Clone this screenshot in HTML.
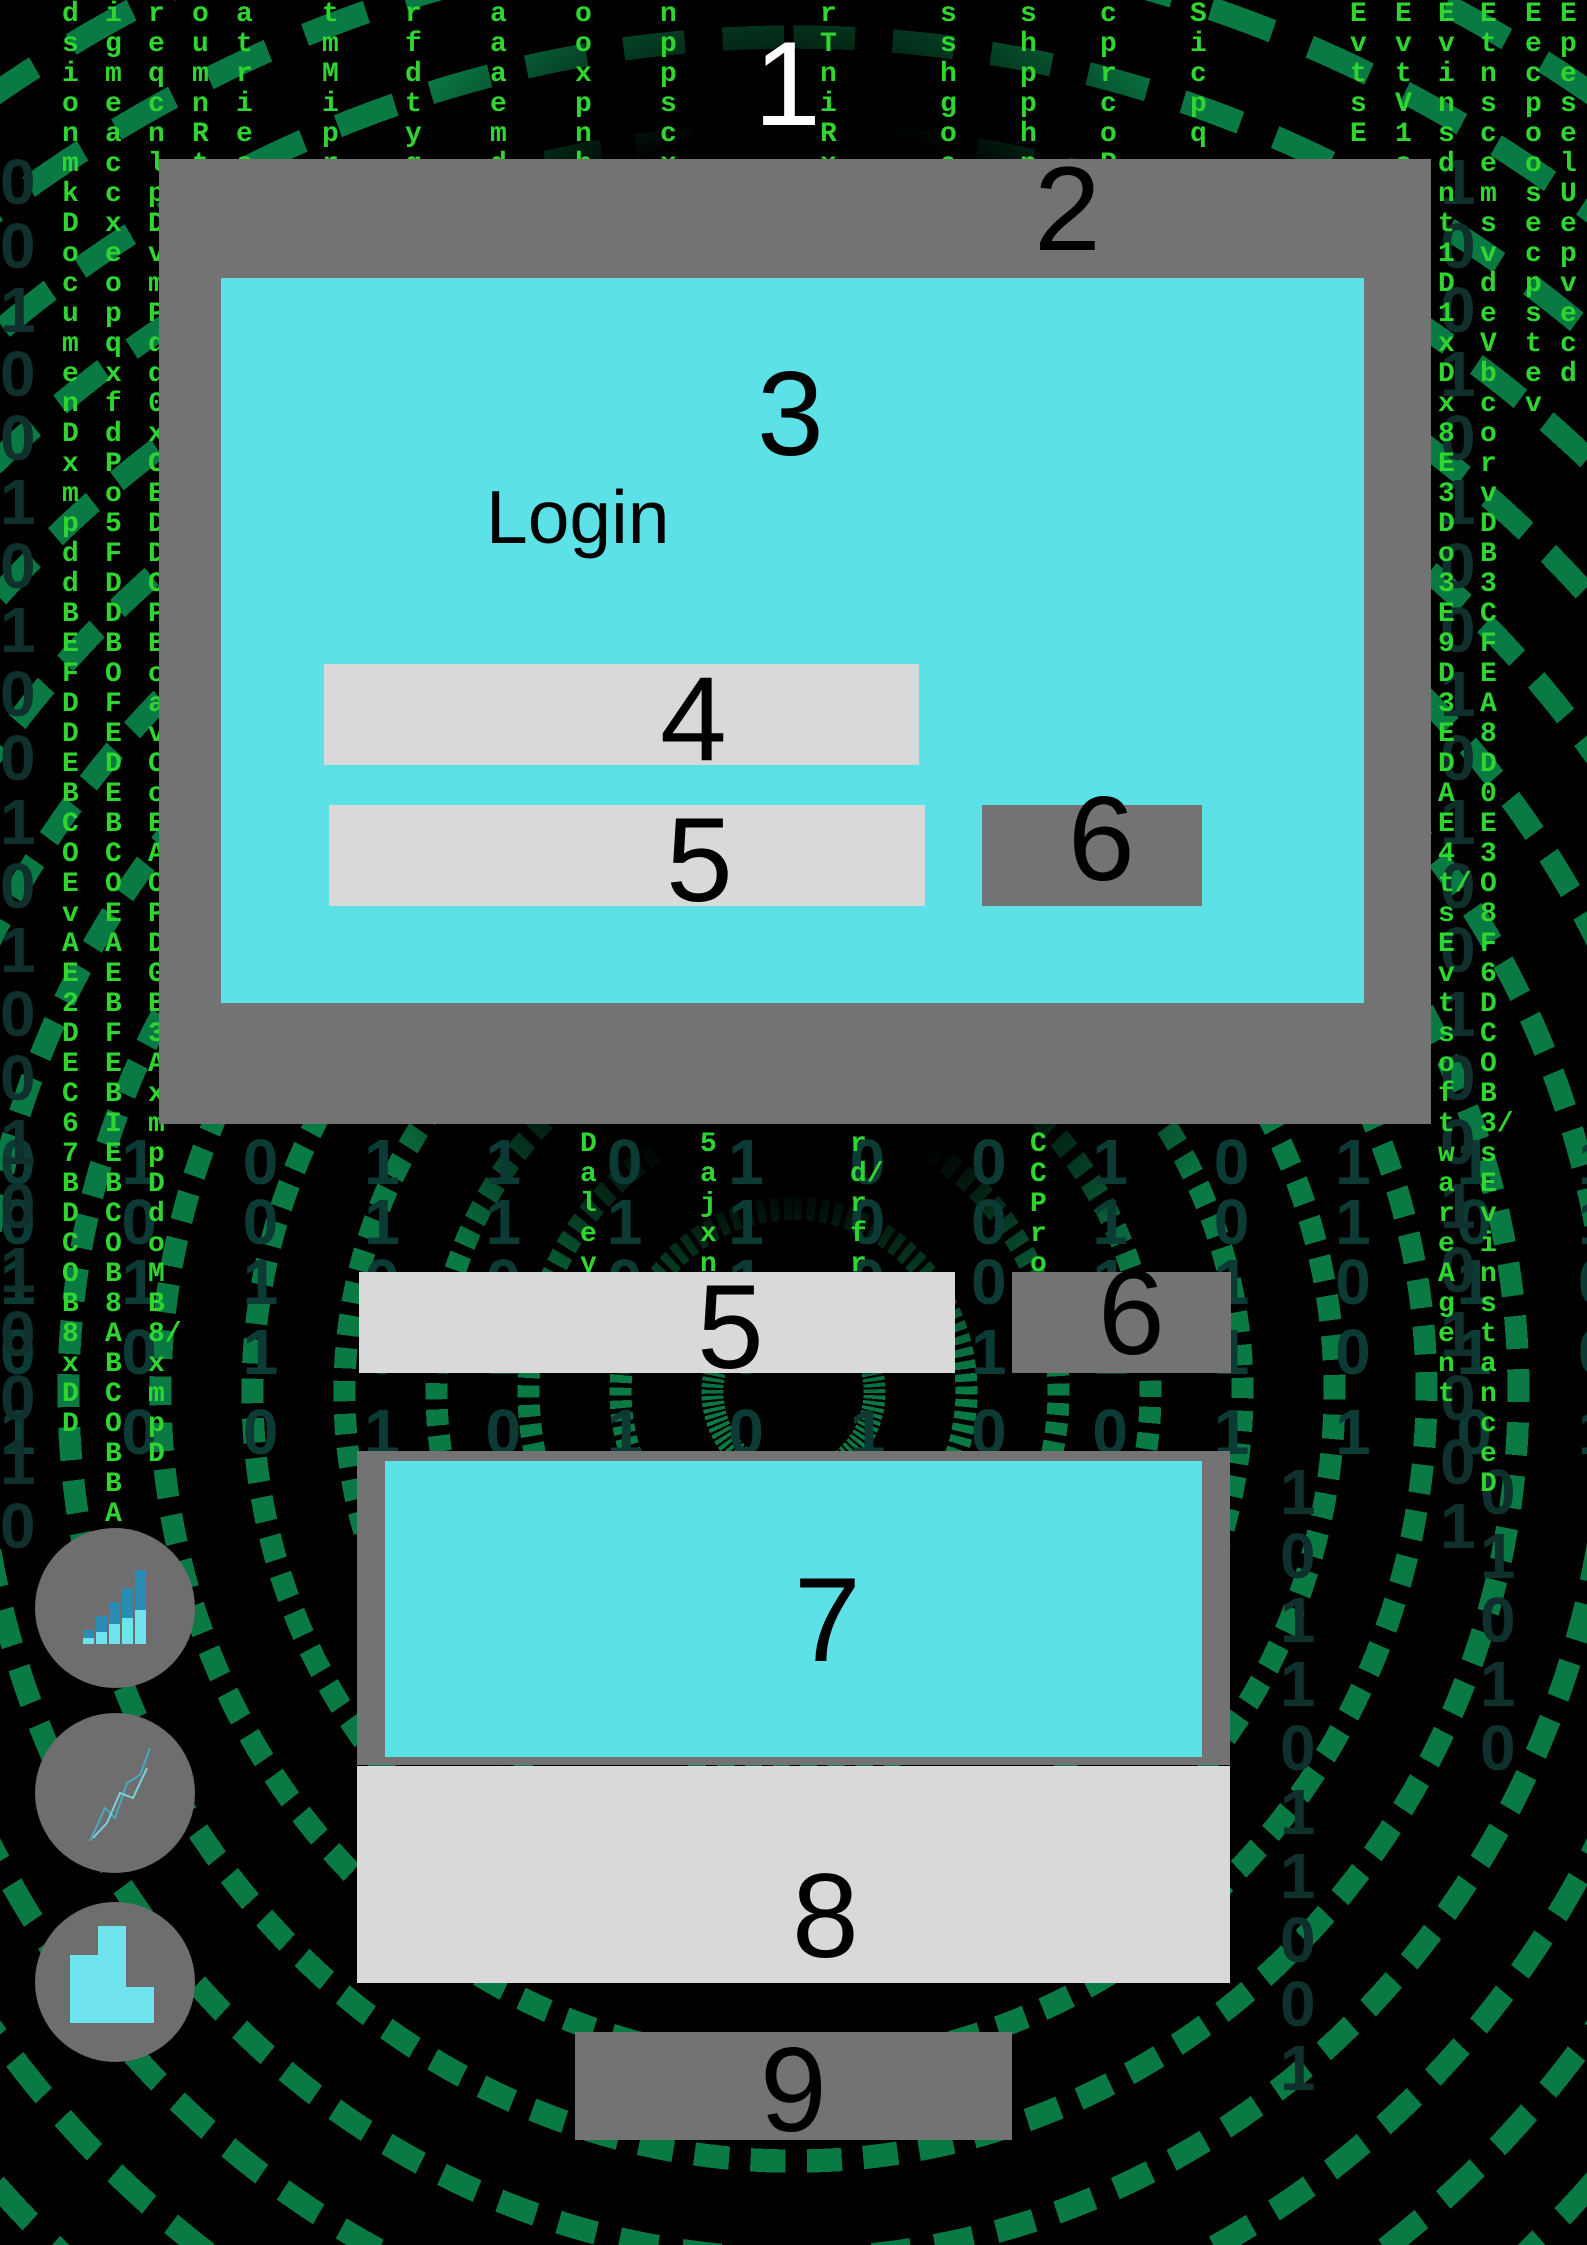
<!DOCTYPE html>
<html><head><meta charset="utf-8"><style>
html,body{margin:0;padding:0}
body{width:1587px;height:2245px;position:relative;overflow:hidden;background:#000;font-family:"Liberation Sans",sans-serif}
.a{position:absolute}
.n{position:absolute;color:#000;font-size:120px;line-height:1;font-weight:300}
.col{position:absolute;color:#2fd62f;font-family:"Liberation Mono",monospace;font-size:28px;line-height:30px;width:20px;word-break:break-all;font-weight:bold}
.bin{position:absolute;color:#0c3b36;font-size:64px;font-weight:bold;letter-spacing:34px;white-space:nowrap;overflow:hidden;width:1587px}
.vb{position:absolute;color:#10302e;font-size:64px;font-weight:bold;width:50px;line-height:64px;word-break:break-all}
#rings{position:absolute;left:0;top:0;width:1587px;height:2245px;background:repeating-radial-gradient(ellipse 100% 75% at 50% 62%,transparent 0 70px,#0a7a45 70px 92px)}
#dash{position:absolute;left:0;top:0;width:1587px;height:2245px;background:repeating-conic-gradient(from 0deg at 50% 62%,transparent 0 2.6deg,#000 2.6deg 4.2deg)}
#cmask{position:absolute;left:250px;top:-100px;width:1100px;height:1500px;background:radial-gradient(ellipse at center,#000 50%,transparent 72%)}
</style></head><body>
<div id="rings"></div><div id="dash"></div><div id="cmask"></div>
<div class="bin" style="left:0;top:1125px">0 1 0 1 1 0 1 0 0 1 0 1 1 1 0 1 0 1 0 1 0 1 1</div>
<div class="bin" style="left:0;top:1185px">0 0 0 1 1 1 1 0 0 1 0 1 0 1 1 0 0 1 1 0 1 0 1</div>
<div class="bin" style="left:0;top:1245px">1 1 1 0 0 0 1 0 0 1 1 0 1 0 1 1 0 0 1 1 0 1 0</div>
<div class="bin" style="left:0;top:1315px">0 0 1 0 1 0 0 0 1 1 1 0 1 0 0 1 0 1 0 0 1 1 0</div>
<div class="bin" style="left:0;top:1395px">1 0 0 1 0 1 0 1 0 0 1 1 0 1 0 1 0 1 0 1 1 0 1</div>
<div class="vb" style="left:1280px;top:1460px">1011011001</div>
<div class="vb" style="left:1480px;top:1460px">01010</div>
<div class="vb" style="left:0;top:150px">0010010100101001010010</div>
<div class="vb" style="left:1440px;top:150px">1001010010100100101001</div>
<div class="col" style="left:62px;top:0">dsionmkDocumenDxmpddBEFDDEBCOEvAE2DEC67BDCOB8xDD</div>
<div class="col" style="left:105px;top:0">igmeaccxeopqxfdPo5FDDBOFEDEBCOEAEBFEBIEBCOB8ABCOBBAD</div>
<div class="col" style="left:148px;top:0">reqcnlpDvmPdd0xCEDDOPBoavCoEAOPDGB3A/xmpDdoMB8/xmpD</div>
<div class="col" style="left:192px;top:0">oumnRtEFcEVCOPxmnpDBT/xmnpOWinsancev</div>
<div class="col" style="left:236px;top:0">atrieshvgTcrcepw</div>
<div class="col" style="left:322px;top:0">tmMiprimtyva</div>
<div class="col" style="left:405px;top:0">rfdtyqaoB</div>
<div class="col" style="left:490px;top:0">aaaemdtcg</div>
<div class="col" style="left:575px;top:0">ooxpnhhop</div>
<div class="col" style="left:660px;top:0">nppscxh</div>
<div class="col" style="left:820px;top:0">rTniRxxm</div>
<div class="col" style="left:940px;top:0">sshgoaDC</div>
<div class="col" style="left:1020px;top:0">shpphpC</div>
<div class="col" style="left:1100px;top:0">cprcoP</div>
<div class="col" style="left:1190px;top:0">Sicpq</div>
<div class="col" style="left:1350px;top:0">EvtsE</div>
<div class="col" style="left:1395px;top:0">EvtV1o13Vo8e3EkVtWh1A</div>
<div class="col" style="left:1438px;top:0">Evinsdnt1D1xDx8E3Do3E9D3EDAE4t/sEvtsoftwareAgent</div>
<div class="col" style="left:1480px;top:0">EtnscemsvdeVbcorvDB3CFEA8D0E3O8F6DCOB3/sEvinstanceD</div>
<div class="col" style="left:1525px;top:0">Eecpoosecpstev</div>
<div class="col" style="left:1560px;top:0">EpeselUepvecd</div>
<div class="col" style="left:580px;top:1130px">DaleyDa</div>
<div class="col" style="left:700px;top:1130px">5ajxnscc</div>
<div class="col" style="left:850px;top:1130px">rd/rfrcl</div>
<div class="col" style="left:1030px;top:1130px">CCPro</div>

<div class="a" style="left:754px;top:24px;color:#fff;font-size:120px;line-height:1">1</div>
<div class="a" style="left:159px;top:159px;width:1272px;height:965px;background:#737373"></div>
<div class="n" style="left:1034px;top:149px">2</div>
<div class="a" style="left:221px;top:278px;width:1143px;height:725px;background:#5ce1e6"></div>
<div class="n" style="left:757px;top:354px">3</div>
<div class="a" style="left:486px;top:480px;font-size:75px;line-height:1;color:#000">Login</div>
<div class="a" style="left:324px;top:664px;width:595px;height:101px;background:#d9d9d9"></div>
<div class="n" style="left:660px;top:659px">4</div>
<div class="a" style="left:329px;top:805px;width:596px;height:101px;background:#d9d9d9"></div>
<div class="n" style="left:666px;top:800px">5</div>
<div class="a" style="left:982px;top:805px;width:220px;height:101px;background:#737373"></div>
<div class="n" style="left:1068px;top:779px">6</div>

<div class="a" style="left:359px;top:1272px;width:596px;height:101px;background:#d9d9d9"></div>
<div class="n" style="left:697px;top:1267px">5</div>
<div class="a" style="left:1012px;top:1272px;width:219px;height:101px;background:#737373"></div>
<div class="n" style="left:1098px;top:1253px">6</div>

<div class="a" style="left:357px;top:1451px;width:873px;height:314px;background:#737373"></div>
<div class="a" style="left:385px;top:1461px;width:817px;height:296px;background:#5ce1e6"></div>
<div class="n" style="left:794px;top:1560px">7</div>
<div class="a" style="left:357px;top:1766px;width:873px;height:217px;background:#d9d9d9"></div>
<div class="n" style="left:792px;top:1856px">8</div>
<div class="a" style="left:575px;top:2032px;width:437px;height:108px;background:#737373"></div>
<div class="n" style="left:760px;top:2030px">9</div>

<svg class="a" style="left:35px;top:1528px" width="160" height="160"><circle cx="80" cy="80" r="80" fill="#6e6e6e"/>
<rect x="48" y="102" width="11" height="14" fill="#2a8bb5"/><rect x="61" y="88" width="11" height="28" fill="#2a8bb5"/><rect x="74" y="74" width="11" height="42" fill="#2a8bb5"/><rect x="87" y="60" width="11" height="56" fill="#2a8bb5"/><rect x="100" y="42" width="11" height="74" fill="#2a8bb5"/>
<rect x="48" y="110" width="11" height="6" fill="#6fe3ee"/><rect x="61" y="104" width="11" height="12" fill="#6fe3ee"/><rect x="74" y="96" width="11" height="20" fill="#6fe3ee"/><rect x="87" y="90" width="11" height="26" fill="#6fe3ee"/><rect x="100" y="82" width="11" height="34" fill="#6fe3ee"/></svg>
<svg class="a" style="left:35px;top:1713px" width="160" height="160"><circle cx="80" cy="80" r="80" fill="#6e6e6e"/>
<polyline points="55,128 70,95 80,105 92,70 105,62 115,35" fill="none" stroke="#4aa8c0" stroke-width="2"/><polyline points="58,125 72,110 85,80 98,85 112,55" fill="none" stroke="#7fd0dd" stroke-width="2"/></svg>
<svg class="a" style="left:35px;top:1902px" width="160" height="160"><circle cx="80" cy="80" r="80" fill="#6e6e6e"/>
<rect x="35" y="53" width="28" height="68" fill="#6fe3ee"/><rect x="63" y="24" width="28" height="97" fill="#6fe3ee"/><rect x="91" y="85" width="28" height="36" fill="#6fe3ee"/></svg>
</body></html>
